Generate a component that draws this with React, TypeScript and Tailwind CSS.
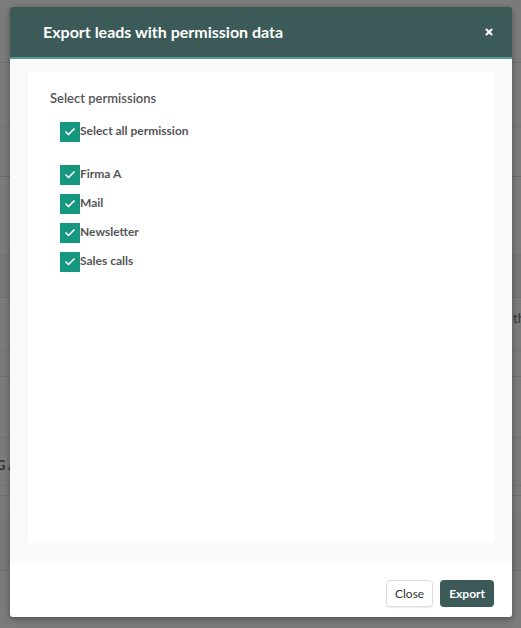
import { Check, X } from 'lucide-react'

const permissions = ['Firma A', 'Mail', 'Newsletter', 'Sales calls']

// faint rows of the page behind the overlay
const rows = [
  { h: 63, cls: 'border-b border-[#6f6f6f]' },
  { h: 64, cls: 'border-b border-[#737373]' },
  { h: 50, cls: 'border-b border-[#6a6a6a]' },
  { h: 78, cls: 'border-b border-[#737373]' },
  { h: 43, cls: 'border-b border-[#6f6f6f] bg-[#777777]' },
  { h: 53, cls: 'border-b border-[#737373]' },
  { h: 26, cls: 'border-b border-[#707070]' },
  { h: 61, cls: 'border-b border-[#737373]' },
  { h: 48, cls: 'border-b border-dotted border-[#6c6c6c]' },
  { h: 10, cls: 'border-b border-[#707070]' },
  { h: 23, cls: '' },
  { h: 52, cls: 'border-b border-[#6f6f6f] bg-[#777777]' },
]

function PermissionCheckbox({ label }: { label: string }) {
  return (
    <label className="flex items-center h-[20px]">
      <span className="flex h-[20px] w-[20px] items-center justify-center bg-[#16977f]">
        <Check className="h-[12px] w-[12px] text-white" strokeWidth={3.5} />
      </span>
      <span className="text-[12px] font-bold text-[#555555] leading-none -mt-[2px]">{label}</span>
    </label>
  )
}

export default function App() {
  return (
    <div
      className="relative h-[628px] w-[521px] overflow-hidden bg-[#7b7b7b]"
      style={{ fontFamily: 'Lato, "Open Sans", sans-serif' }}
    >
      <div className="flex flex-col">
        {rows.map((r, i) => (
          <div key={i} className={r.cls} style={{ height: r.h }} />
        ))}
      </div>
      <span className="absolute left-[-4px] top-[456px] text-[13px] font-bold text-[#333333]">G A</span>
      <span className="absolute left-[513px] top-[309px] text-[13px] text-[#333333]">th</span>

      <div className="absolute left-[10px] top-[7px] w-[502px] overflow-hidden rounded-[3px] shadow-[0_2px_6px_rgba(0,0,0,0.35)]">
        <div className="flex h-[52px] items-center justify-between border-b-2 border-[#5c9793] bg-[#3b5a58] pl-[33px] pr-[18px]">
          <h2 className="text-[16px] font-bold text-white">Export leads with permission data</h2>
          <X className="h-[10px] w-[10px] text-white" strokeWidth={5} />
        </div>

        <div className="bg-[#f9f9f9] px-[18px] pt-[13px] pb-[18px]">
          <div className="h-[471px] bg-white pl-[22px] pt-[18px]">
            <p className="text-[13px] font-semibold text-[#555555] leading-[16px]">Select permissions</p>
            <div className="ml-[10px] mt-[16px] flex flex-col">
              <PermissionCheckbox label="Select all permission" />
              <div className="mt-[23px] flex flex-col gap-[9px]">
                {permissions.map((p) => (
                  <PermissionCheckbox key={p} label={p} />
                ))}
              </div>
            </div>
          </div>
        </div>

        <div className="flex h-[56px] items-start justify-end gap-[7px] bg-white pr-[18px] pt-[19px]">
          <button className="h-[27px] rounded-[4px] border border-[#dddddd] bg-white px-[8px] text-[12px] text-[#333333] shadow-[0_1px_1px_rgba(0,0,0,0.08)]">
            Close
          </button>
          <button className="h-[27px] rounded-[4px] bg-[#3b5a58] px-[9px] text-[12px] font-bold text-white">
            Export
          </button>
        </div>
      </div>
    </div>
  )
}
